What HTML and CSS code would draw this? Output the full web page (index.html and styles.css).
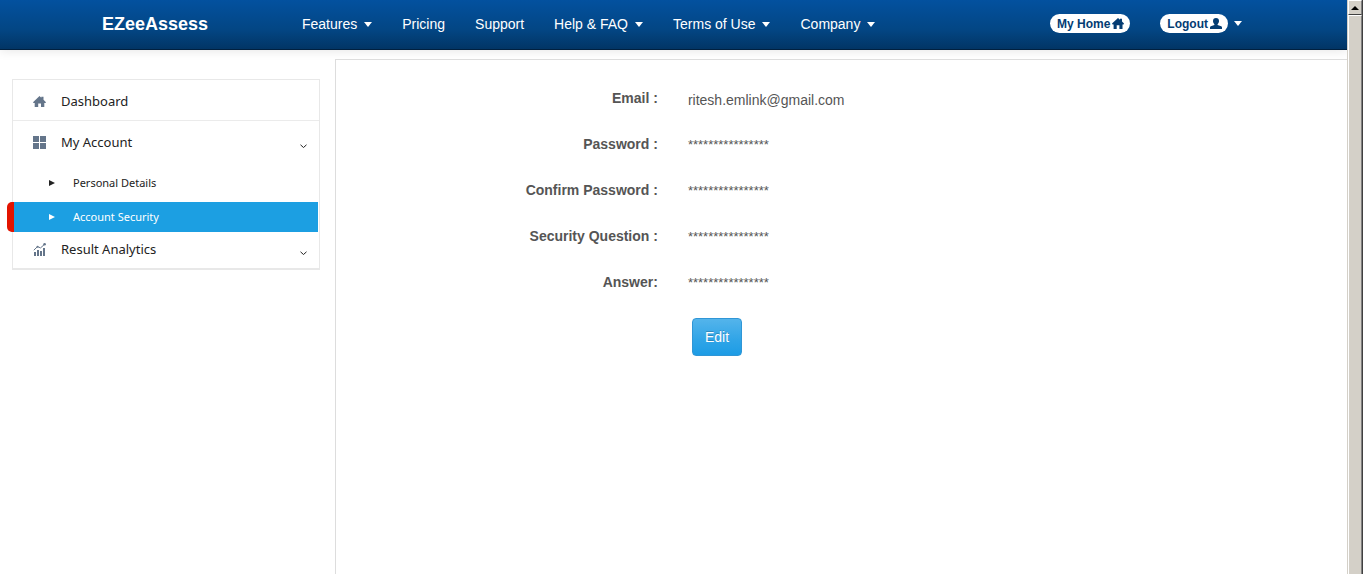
FILE: index.html
```html
<!DOCTYPE html>
<html lang="en">
<head>
<meta charset="utf-8">
<meta name="viewport" content="width=device-width, initial-scale=1">
<title>EZeeAssess - Account Security</title>
<link rel="stylesheet" href="styles.css">
</head>
<body>
<div class="window">
  <div class="page">
    <header class="navbar">
      <a class="brand" href="#">EZeeAssess</a>
      <nav class="menu" aria-label="Main">
        <a href="#">Features<span class="caret"></span></a>
        <a href="#">Pricing</a>
        <a href="#">Support</a>
        <a href="#">Help &amp; FAQ<span class="caret"></span></a>
        <a href="#">Terms of Use<span class="caret"></span></a>
        <a href="#">Company<span class="caret"></span></a>
      </nav>
      <div class="user">
        <a class="pill" href="#">My Home
          <svg width="12" height="11" viewBox="0 0 12 11" fill="currentColor" aria-hidden="true"><path d="M6 0 8 1.700V.8h2v2.700l2 2.100-.5.8h-1V11H7.400V7.200H4.700V11H1.600V6.400h-1L0 5.600z"/></svg>
        </a>
        <a class="account" href="#"><span class="pill">Logout
          <svg width="12" height="11" viewBox="0 0 12 11" fill="currentColor" aria-hidden="true"><path d="M6 0c2 0 3 1.300 3 3 0 1.300-.6 2.500-1.400 3.200v.7l3.600 1.300c.6.3.8.6.8 1.200V11H0V9.400c0-.6.2-.9.8-1.200l3.600-1.300v-.7C3.600 5.500 3 4.300 3 3c0-1.700 1-3 3-3z"/></svg>
        </span><span class="caret"></span></a>
      </div>
    </header>
    <div class="body">
      <aside class="sidebar">
        <ul class="side-menu">
          <li class="divided"><a class="item" href="#">
            <svg class="icon" viewBox="0 0 13 13" aria-hidden="true"><path d="M6.500 1 8.300 2.700V1.800h2.200v3L13 7.200l-.5.8h-1.200v4H8V8.500H5.200V12h-3.500V8H.5L0 7.200z"/></svg>
            <span>Dashboard</span></a></li>
          <li><a class="item" href="#">
            <svg class="icon" viewBox="0 0 13 13" aria-hidden="true"><path d="M0 0h6v6H0zM7 0h6v6H7zM0 7h6v6H0zM7 7h6v6H7z"/></svg>
            <span>My Account</span>
            <svg class="chevron" viewBox="0 0 7 5" aria-hidden="true"><path d="M.5.8 3.500 3.500 6.500.8"/></svg></a>
            <ul class="submenu">
              <li><a class="subitem" href="#"><span class="arrow"></span>Personal Details</a></li>
              <li><a class="subitem active" href="#" aria-current="page"><span class="arrow"></span>Account Security</a></li>
            </ul>
          </li>
          <li><a class="item compact" href="#">
            <svg class="icon" viewBox="0 0 13 13" aria-hidden="true"><path d="M1 9h2v4H1zM4 7h2v6H4zM7 8h2v5H7zM10 5h2v8h-2z"/><path class="trend" d="M.8 7.200 4.500 3.600 7.500 4.900 11.600 1.300"/><circle cx="11.600" cy="1.300" r="1.300"/><circle cx="4.500" cy="3.700" r="1"/></svg>
            <span>Result Analytics</span>
            <svg class="chevron" viewBox="0 0 7 5" aria-hidden="true"><path d="M.5.8 3.500 3.500 6.500.8"/></svg></a></li>
        </ul>
      </aside>
      <main class="content">
        <dl class="details">
          <dt>Email :</dt><dd class="email">ritesh.emlink@gmail.com</dd>
          <dt>Password :</dt><dd>****************</dd>
          <dt>Confirm Password :</dt><dd>****************</dd>
          <dt>Security Question :</dt><dd>****************</dd>
          <dt>Answer:</dt><dd>****************</dd>
          <dd class="actions"><button class="edit" type="button">Edit</button></dd>
        </dl>
      </main>
    </div>
  </div>
  <div class="scrollbar">
    <button class="scroll-up" type="button" aria-label="Scroll up"></button>
    <div class="thumb"></div>
  </div>
</div>
</body>
</html>
```
FILE: styles.css
```css
* { box-sizing: border-box; }
body {
  margin: 0;
  background: #fff;
  color: #555;
  font: 14px/20px "Liberation Sans", Arial, sans-serif;
}
a { color: inherit; text-decoration: none; }
ul, dl, dd { margin: 0; padding: 0; list-style: none; }

.window { display: flex; min-height: 100vh; padding-right: 3px; }
.page { flex: 1; display: flex; flex-direction: column; min-width: 0; }

.navbar {
  display: flex;
  align-items: center;
  height: 50px;
  padding: 0 105px 2px 102px;
  color: #fff;
  background: linear-gradient(#03519f, #034684 60%, #023565);
  border-bottom: 1px solid #01203f;
  box-shadow: 0 1px 10px rgba(0, 0, 0, .1);
  white-space: nowrap;
}
.brand { width: 200px; font-size: 18px; font-weight: bold; }
.menu { display: flex; gap: 30px; flex: 1; }
.caret {
  display: inline-block;
  margin-left: 7px;
  vertical-align: middle;
  border: 4px solid transparent;
  border-top: 5px solid #fff;
  border-bottom: 0;
}
.user { display: flex; align-items: center; gap: 30px; }
.pill {
  display: inline-flex;
  align-items: center;
  gap: 2px;
  height: 19px;
  padding: 0 6px 0 7px;
  border-radius: 10px;
  background: #fff;
  color: #033c73;
  font-size: 12px;
  font-weight: bold;
}
.account { display: flex; align-items: center; }
.account .caret { margin-left: 6px; }

.body { flex: 1; display: flex; }
.sidebar { flex: 0 0 335px; padding: 29px 15px 0 12px; }
.side-menu {
  border: 1px solid #e8e8e8;
  border-bottom-width: 2px;
  color: #222;
  font: 13px/20px "Noto Sans", "Open Sans", sans-serif;
}
.divided { border-bottom: 1px solid #ebebeb; }
.item { display: flex; align-items: center; height: 40px; padding: 2px 12px 0 20px; }
.item span { flex: 1; }
.compact { height: 36px; padding: 0 12px 2px 20px; }
.icon { width: 13px; height: 13px; margin-right: 15px; fill: #64758a; }
.trend { fill: none; stroke: #64758a; }
.chevron { width: 7px; height: 5px; margin-top: 8px; fill: none; stroke: #222; stroke-width: 1; }
.submenu { display: grid; gap: 4px; padding: 7px 1px 0 0; font-size: 11px; }
.subitem { display: flex; align-items: center; height: 30px; padding-left: 36px; }
.arrow {
  width: 6px;
  margin-right: 18px;
  border: 3px solid transparent;
  border-left: 6px solid currentColor;
  border-right: 0;
}
.active {
  margin-left: -6px;
  border-left: 7px solid #e31400;
  border-radius: 5px 0 0 5px;
  background: #1c9fe2;
  color: #fff;
  padding-left: 35px;
}

.content {
  flex: 1;
  margin-top: 9px;
  padding: 28px 5px 0 0;
  border: solid #ddd;
  border-width: 1px 0 0 1px;
  background: #fff;
}
.details { display: grid; grid-template-columns: 32% 1fr; column-gap: 30px; grid-auto-rows: 46px; }
.details dt { font-weight: bold; text-align: right; }
.details dd { font-size: 13px; padding-top: 1px; }
.details .email { font-size: 14px; padding-top: 2px; }
.details .actions { grid-column: 2; padding: 0 0 0 4px; }
.edit {
  height: 38px;
  padding: 0 12px;
  border: 1px solid #2f96d6;
  border-radius: 4px;
  background: linear-gradient(#54b4eb, #2fa4e7 60%, #1d9ce5);
  color: #fff;
  font: inherit;
  font-size: 14px;
  text-shadow: 0 -1px 0 rgba(0, 0, 0, .2);
}

.scrollbar {
  flex: 0 0 16px;
  display: flex;
  flex-direction: column;
  border-left: 1px solid #d4d0c8;
  border-right: 1px solid #404040;
}
.scroll-up, .thumb {
  border: 1px solid;
  border-color: #fff #808080 #808080 #fff;
  background: #d4d0c8;
}
.scroll-up { display: grid; place-items: center; height: 15px; padding: 0; border-bottom-color: #404040; }
.scroll-up::before {
  content: "";
  border: 4px solid transparent;
  border-bottom-color: #000;
  border-top: 0;
}
.thumb { flex: 1; border-bottom: 0; }
```
